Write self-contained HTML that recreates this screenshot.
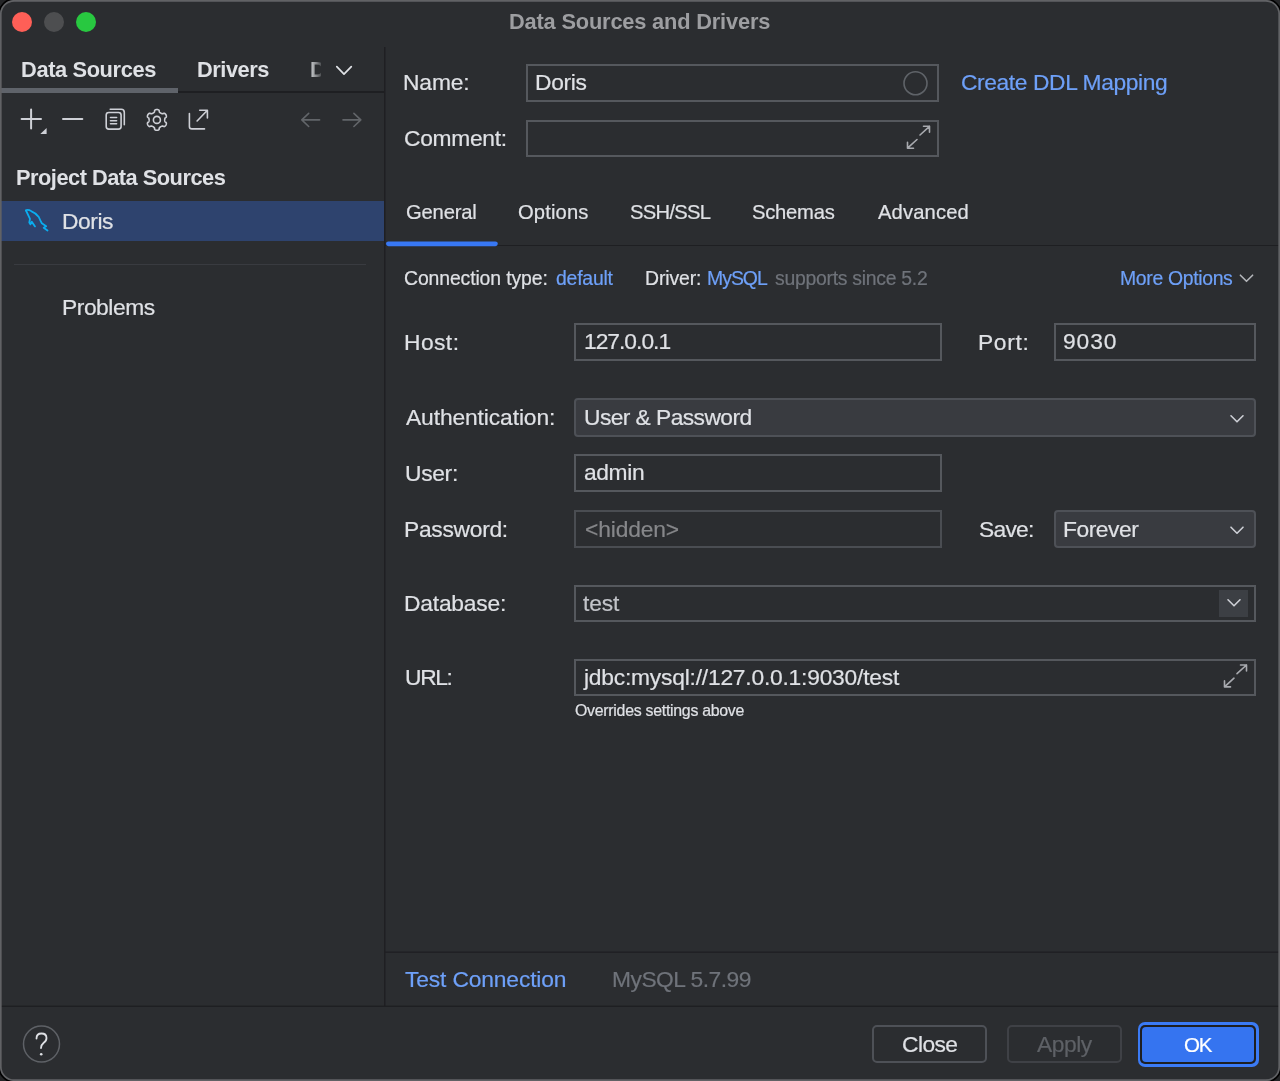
<!DOCTYPE html>
<html><head><meta charset="utf-8"><title>Data Sources and Drivers</title>
<style>
html,body{margin:0;padding:0;width:1280px;height:1081px;overflow:hidden;background:#242527;}
body{font-family:"Liberation Sans",sans-serif;position:relative;}
#win{position:absolute;left:0;top:0;width:1280px;height:1081px;box-sizing:border-box;border-radius:14px;background:#2B2D30;}
.a{position:absolute;box-sizing:border-box;}
.t{position:absolute;line-height:1;white-space:pre;will-change:transform;}
.fld{position:absolute;box-sizing:border-box;border:2px solid #55585D;}
.cmb{position:absolute;box-sizing:border-box;border:2px solid #4E5157;background:#393B40;border-radius:4px;}
.btn{position:absolute;box-sizing:border-box;border:2px solid #4E5157;border-radius:5px;}
svg{position:absolute;left:0;top:0;}
</style></head>
<body>
<div id="win"></div>
<!-- traffic lights -->
<div class="a" style="left:12.4px;top:12.4px;width:20px;height:20px;border-radius:50%;background:#FF5F57"></div>
<div class="a" style="left:44.4px;top:12.4px;width:20px;height:20px;border-radius:50%;background:#4D4E50"></div>
<div class="a" style="left:76.4px;top:12.4px;width:20px;height:20px;border-radius:50%;background:#28C840"></div>
<!-- left panel lines -->
<div class="a" style="left:2px;top:91px;width:382px;height:2px;background:#1E1F22"></div>
<div class="a" style="left:0px;top:88px;width:178px;height:5px;background:#5F636A"></div>
<div class="a" style="left:0px;top:201px;width:384px;height:40px;background:#2E436E"></div>
<div class="a" style="left:14px;top:264px;width:352px;height:1px;background:#393B40"></div>
<!-- vertical divider -->
<svg width="1280" height="1081" viewBox="0 0 1280 1081">
 <rect x="384.1" y="47" width="1.4" height="959" fill="#1E1F22"/>
 <rect x="385" y="951.5" width="895" height="1.3" fill="#1E1F22"/>
 <rect x="0" y="1005.6" width="1280" height="1.4" fill="#1E1F22"/>
 <rect x="385" y="245" width="895" height="1" fill="#1E1F22"/>
 <rect x="386" y="241.4" width="111.8" height="4.8" rx="2.4" fill="#3878F4"/>
</svg>


<!-- bottom lines -->


<!-- tabs -->


<!-- fields -->
<div class="fld" style="left:526px;top:64px;width:413px;height:38px"></div>
<div class="fld" style="left:526px;top:120px;width:413px;height:37px"></div>
<div class="fld" style="left:574px;top:323px;width:368px;height:38px"></div>
<div class="fld" style="left:1054px;top:323px;width:202px;height:38px"></div>
<div class="cmb" style="left:574px;top:398px;width:682px;height:39px"></div>
<div class="fld" style="left:574px;top:454px;width:368px;height:38px"></div>
<div class="fld" style="left:574px;top:510px;width:368px;height:38px;border-color:#4A4D52"></div>
<div class="cmb" style="left:1054px;top:510px;width:202px;height:38px"></div>
<div class="fld" style="left:574px;top:585px;width:682px;height:37px"></div>
<div class="a" style="left:1219px;top:590px;width:29px;height:27px;background:#3C3F44"></div>
<div class="fld" style="left:574px;top:659px;width:682px;height:37px"></div>
<!-- buttons -->
<div class="btn" style="left:872px;top:1025px;width:115px;height:38px"></div>
<div class="btn" style="left:1006.5px;top:1025px;width:115px;height:38px;border-color:#3F4146"></div>
<div class="a" style="left:1138px;top:1022px;width:121px;height:44.5px;border-radius:7px;background:#3B7BF5"></div>
<div class="a" style="left:1140px;top:1025px;width:115.5px;height:38.5px;border-radius:5px;background:#1E1F22"></div>
<div class="a" style="left:1141.5px;top:1026.5px;width:112.5px;height:35.5px;border-radius:4px;background:#3574F0"></div>
<svg width="1280" height="1081" viewBox="0 0 1280 1081" fill="none" stroke-linecap="round" stroke-linejoin="round">
 <!-- toolbar icons -->
 <g stroke="#CED0D6" stroke-width="2">
  <path d="M21.6 119H41M31.1 109.6V128.6"/>
  <path d="M63 119H82.3"/>
 </g>
 <path d="M46.6 128.1V134H40.3Z" fill="#CED0D6"/>
 <g stroke="#CED0D6" stroke-width="1.6">
  <rect x="106.2" y="112.5" width="14.9" height="16.6" rx="2.6"/>
  <path d="M110.2 109.3H121.2Q124.3 109.3 124.3 112.4V124.8"/>
  <path d="M110.5 117.5H116.6M110.5 120.7H116.6M110.5 123.8H116.6"/>
  <circle cx="156.9" cy="119.9" r="3.5"/>
  <path d="M189.4 113.6V126.4Q189.4 128.9 191.9 128.9H204.5"/>
  <path d="M197.1 121L207.4 110.3M199.7 110.3H207.4V118"/>
 </g>
 <path id="gear" stroke="#CED0D6" stroke-width="1.6" d="M164.70 119.90 L164.70 119.70 L164.72 119.49 L164.73 119.28 L164.76 119.07 L164.80 118.86 L164.85 118.64 L164.92 118.41 L165.01 118.18 L165.15 117.92 L165.69 117.54 L166.22 117.14 L166.33 116.84 L166.37 116.55 L166.38 116.26 L166.35 115.98 L166.30 115.71 L166.23 115.45 L166.14 115.19 L166.03 114.94 L165.91 114.70 L165.76 114.47 L165.60 114.25 L165.42 114.04 L165.23 113.85 L165.02 113.67 L164.79 113.51 L164.54 113.37 L164.27 113.27 L163.95 113.21 L163.33 113.47 L162.74 113.75 L162.45 113.74 L162.19 113.70 L161.97 113.64 L161.75 113.58 L161.55 113.50 L161.35 113.42 L161.16 113.34 L160.98 113.24 L160.80 113.15 L160.62 113.04 L160.45 112.93 L160.28 112.81 L160.12 112.68 L159.95 112.54 L159.78 112.39 L159.62 112.22 L159.46 112.02 L159.31 111.77 L159.26 111.11 L159.17 110.45 L158.96 110.20 L158.73 110.02 L158.49 109.87 L158.24 109.76 L157.98 109.66 L157.71 109.59 L157.44 109.54 L157.17 109.51 L156.90 109.50 L156.63 109.51 L156.36 109.54 L156.09 109.59 L155.82 109.66 L155.56 109.76 L155.31 109.87 L155.07 110.02 L154.84 110.20 L154.63 110.45 L154.54 111.11 L154.49 111.77 L154.34 112.02 L154.18 112.22 L154.02 112.39 L153.85 112.54 L153.68 112.68 L153.52 112.81 L153.35 112.93 L153.18 113.04 L153.00 113.15 L152.82 113.24 L152.64 113.34 L152.45 113.42 L152.25 113.50 L152.05 113.58 L151.83 113.64 L151.61 113.70 L151.35 113.74 L151.06 113.75 L150.47 113.47 L149.85 113.21 L149.53 113.27 L149.26 113.37 L149.01 113.51 L148.78 113.67 L148.57 113.85 L148.38 114.04 L148.20 114.25 L148.04 114.47 L147.89 114.70 L147.77 114.94 L147.66 115.19 L147.57 115.45 L147.50 115.71 L147.45 115.98 L147.42 116.26 L147.43 116.55 L147.47 116.84 L147.58 117.14 L148.11 117.54 L148.65 117.92 L148.79 118.18 L148.88 118.41 L148.95 118.64 L149.00 118.86 L149.04 119.07 L149.07 119.28 L149.08 119.49 L149.10 119.70 L149.10 119.90 L149.10 120.10 L149.08 120.31 L149.07 120.52 L149.04 120.73 L149.00 120.94 L148.95 121.16 L148.88 121.39 L148.79 121.62 L148.65 121.88 L148.11 122.26 L147.58 122.66 L147.47 122.96 L147.43 123.25 L147.42 123.54 L147.45 123.82 L147.50 124.09 L147.57 124.35 L147.66 124.61 L147.77 124.86 L147.89 125.10 L148.04 125.33 L148.20 125.55 L148.38 125.76 L148.57 125.95 L148.78 126.13 L149.01 126.29 L149.26 126.43 L149.53 126.53 L149.85 126.59 L150.47 126.33 L151.06 126.05 L151.35 126.06 L151.61 126.10 L151.83 126.16 L152.05 126.22 L152.25 126.30 L152.45 126.38 L152.64 126.46 L152.82 126.56 L153.00 126.65 L153.18 126.76 L153.35 126.87 L153.52 126.99 L153.68 127.12 L153.85 127.26 L154.02 127.41 L154.18 127.58 L154.34 127.78 L154.49 128.03 L154.54 128.69 L154.63 129.35 L154.84 129.60 L155.07 129.78 L155.31 129.93 L155.56 130.04 L155.82 130.14 L156.09 130.21 L156.36 130.26 L156.63 130.29 L156.90 130.30 L157.17 130.29 L157.44 130.26 L157.71 130.21 L157.98 130.14 L158.24 130.04 L158.49 129.93 L158.73 129.78 L158.96 129.60 L159.17 129.35 L159.26 128.69 L159.31 128.03 L159.46 127.78 L159.62 127.58 L159.78 127.41 L159.95 127.26 L160.12 127.12 L160.28 126.99 L160.45 126.87 L160.62 126.76 L160.80 126.65 L160.98 126.56 L161.16 126.46 L161.35 126.38 L161.55 126.30 L161.75 126.22 L161.97 126.16 L162.19 126.10 L162.45 126.06 L162.74 126.05 L163.33 126.33 L163.95 126.59 L164.27 126.53 L164.54 126.43 L164.79 126.29 L165.02 126.13 L165.23 125.95 L165.42 125.76 L165.60 125.55 L165.76 125.33 L165.91 125.10 L166.03 124.86 L166.14 124.61 L166.23 124.35 L166.30 124.09 L166.35 123.82 L166.38 123.54 L166.37 123.25 L166.33 122.96 L166.22 122.66 L165.69 122.26 L165.15 121.88 L165.01 121.62 L164.92 121.39 L164.85 121.16 L164.80 120.94 L164.76 120.73 L164.73 120.52 L164.72 120.31 L164.70 120.10Z"/>
 <g stroke="#626569" stroke-width="1.6">
  <path d="M301.8 119.9H319.6M308.7 113.4L301.8 119.9L308.7 126.5"/>
  <path d="M343 119.9H360.8M353.9 113.4L360.8 119.9L353.9 126.5"/>
 </g>
 <path d="M336.8 66.6L344 74.2L351.3 66.6" stroke="#DFE1E5" stroke-width="1.7"/>
 <!-- dolphin -->
 <g stroke="#0AAEF0" stroke-width="1.8">
  <path d="M26 210.3Q28 209.3 31.5 211.3Q36 213 38.8 217Q40.5 221 41.8 223.3Q44 224.8 46.2 226.2L43.7 227.7L47.5 230.5"/>
  <path d="M26 210.5L28.8 216.3L30 218.8L29.3 222.5L30.4 224.4L31.8 221.8L35 226.4"/>
 </g>
 <!-- name circle, expand icons -->
 <circle cx="915.5" cy="83.3" r="11.5" stroke="#5F6368" stroke-width="1.6"/>
 <g stroke="#A8AAAF" stroke-width="1.6">
  <path d="M920 135L929.5 126.3M923.5 126.3H929.5V132.3"/>
  <path d="M917 139.5L907.5 148.2M913.5 148.2H907.5V142.2"/>
  <path d="M1237 673.7L1246.5 665M1240.5 665H1246.5V671"/>
  <path d="M1234 678.2L1224.5 686.9M1230.5 686.9H1224.5V680.9"/>
 </g>
 <!-- chevrons -->
 <path d="M1240.4 275.2L1246.5 281.3L1252.6 275.2" stroke="#B4B6BA" stroke-width="1.6"/>
 <g stroke="#CED0D6" stroke-width="1.6">
  <path d="M1231 415.8L1237 421.8L1243 415.8"/>
  <path d="M1231 527.2L1237 533.2L1243 527.2"/>
  <path d="M1228 599.8L1234 605.8L1240 599.8"/>
 </g>
 <!-- help -->
 <circle cx="41.5" cy="1044" r="18" stroke="#5E6166" stroke-width="1.5"/>
 <path d="M36.5 1038.5Q36.5 1033.5 41.5 1033.5Q46.5 1033.5 46.5 1038Q46.5 1041 43.5 1043Q41 1045 41 1048" stroke="#DFE1E5" stroke-width="1.8"/>
 <circle cx="41.2" cy="1054.3" r="1.3" fill="#DFE1E5"/>
</svg>
<!-- truncated D tab -->
<div class="t" style="left:310px;top:58.6px;font-size:22px;font-weight:700;color:#B8BABD;width:11px;overflow:hidden;-webkit-mask-image:linear-gradient(90deg,#000 20%,rgba(0,0,0,.25) 100%)">D</div>

<div class='t' style='left:508.50px;top:10.65px;font-size:21.8px;font-weight:700;color:#9D9EA1;letter-spacing:-0.174px;-webkit-text-stroke:0 #9D9EA1'>Data Sources and Drivers</div>
<div class='t' style='left:20.55px;top:58.65px;font-size:21.8px;font-weight:700;color:#DFE1E5;letter-spacing:-0.364px;-webkit-text-stroke:0 #DFE1E5'>Data Sources</div>
<div class='t' style='left:196.80px;top:58.65px;font-size:21.8px;font-weight:700;color:#DFE1E5;letter-spacing:-0.450px;-webkit-text-stroke:0 #DFE1E5'>Drivers</div>
<div class='t' style='left:15.80px;top:167.25px;font-size:21.8px;font-weight:700;color:#DFE1E5;letter-spacing:-0.500px;-webkit-text-stroke:0 #DFE1E5'>Project Data Sources</div>
<div class='t' style='left:62.10px;top:210.00px;font-size:22.8px;font-weight:400;color:#DFE1E5;letter-spacing:-0.450px;-webkit-text-stroke:0.2px #DFE1E5'>Doris</div>
<div class='t' style='left:61.60px;top:295.80px;font-size:22.8px;font-weight:400;color:#DFE1E5;letter-spacing:-0.457px;-webkit-text-stroke:0.2px #DFE1E5'>Problems</div>
<div class='t' style='left:403.40px;top:71.00px;font-size:22.8px;font-weight:400;color:#DFE1E5;letter-spacing:-0.125px;-webkit-text-stroke:0.2px #DFE1E5'>Name:</div>
<div class='t' style='left:534.70px;top:71.00px;font-size:22.8px;font-weight:400;color:#DFE1E5;letter-spacing:-0.300px;-webkit-text-stroke:0.2px #DFE1E5'>Doris</div>
<div class='t' style='left:404.40px;top:126.60px;font-size:22.8px;font-weight:400;color:#DFE1E5;letter-spacing:-0.286px;-webkit-text-stroke:0.2px #DFE1E5'>Comment:</div>
<div class='t' style='left:961.20px;top:70.50px;font-size:22.8px;font-weight:400;color:#6EA0F8;letter-spacing:-0.388px;-webkit-text-stroke:0.2px #6EA0F8'>Create DDL Mapping</div>
<div class='t' style='left:406.20px;top:202.25px;font-size:20.2px;font-weight:400;color:#DFE1E5;letter-spacing:-0.167px;-webkit-text-stroke:0.2px #DFE1E5'>General</div>
<div class='t' style='left:518.20px;top:202.25px;font-size:20.2px;font-weight:400;color:#DFE1E5;letter-spacing:0.125px;-webkit-text-stroke:0.2px #DFE1E5'>Options</div>
<div class='t' style='left:629.90px;top:202.25px;font-size:20.2px;font-weight:400;color:#DFE1E5;letter-spacing:-0.700px;-webkit-text-stroke:0.2px #DFE1E5'>SSH/SSL</div>
<div class='t' style='left:751.90px;top:202.25px;font-size:20.2px;font-weight:400;color:#DFE1E5;letter-spacing:-0.233px;-webkit-text-stroke:0.2px #DFE1E5'>Schemas</div>
<div class='t' style='left:877.50px;top:202.25px;font-size:20.2px;font-weight:400;color:#DFE1E5;letter-spacing:0.143px;-webkit-text-stroke:0.2px #DFE1E5'>Advanced</div>
<div class='t' style='left:404.45px;top:268.68px;font-size:19.4px;font-weight:400;color:#DFE1E5;letter-spacing:-0.117px;-webkit-text-stroke:0.2px #DFE1E5'>Connection type:</div>
<div class='t' style='left:556.20px;top:268.68px;font-size:19.4px;font-weight:400;color:#6EA0F8;letter-spacing:-0.208px;-webkit-text-stroke:0.2px #6EA0F8'>default</div>
<div class='t' style='left:644.50px;top:268.68px;font-size:19.4px;font-weight:400;color:#DFE1E5;letter-spacing:-0.117px;-webkit-text-stroke:0.2px #DFE1E5'>Driver:</div>
<div class='t' style='left:706.90px;top:268.68px;font-size:19.4px;font-weight:400;color:#6EA0F8;letter-spacing:-0.975px;-webkit-text-stroke:0.2px #6EA0F8'>MySQL</div>
<div class='t' style='left:774.90px;top:268.68px;font-size:19.4px;font-weight:400;color:#6F737A;letter-spacing:-0.276px;-webkit-text-stroke:0.2px #6F737A'>supports since 5.2</div>
<div class='t' style='left:1120.00px;top:268.68px;font-size:19.4px;font-weight:400;color:#6EA0F8;letter-spacing:-0.327px;-webkit-text-stroke:0.2px #6EA0F8'>More Options</div>
<div class='t' style='left:403.70px;top:331.30px;font-size:22.8px;font-weight:400;color:#DFE1E5;letter-spacing:0.438px;-webkit-text-stroke:0.2px #DFE1E5'>Host:</div>
<div class='t' style='left:583.70px;top:330.30px;font-size:22.8px;font-weight:400;color:#DFE1E5;letter-spacing:-1.000px;-webkit-text-stroke:0.2px #DFE1E5'>127.0.0.1</div>
<div class='t' style='left:977.80px;top:331.30px;font-size:22.8px;font-weight:400;color:#DFE1E5;letter-spacing:0.650px;-webkit-text-stroke:0.2px #DFE1E5'>Port:</div>
<div class='t' style='left:1063.40px;top:330.30px;font-size:22.8px;font-weight:400;color:#DFE1E5;letter-spacing:0.900px;-webkit-text-stroke:0.2px #DFE1E5'>9030</div>
<div class='t' style='left:405.70px;top:406.30px;font-size:22.8px;font-weight:400;color:#DFE1E5;letter-spacing:-0.107px;-webkit-text-stroke:0.2px #DFE1E5'>Authentication:</div>
<div class='t' style='left:583.70px;top:406.30px;font-size:22.8px;font-weight:400;color:#DFE1E5;letter-spacing:-0.571px;-webkit-text-stroke:0.2px #DFE1E5'>User &amp; Password</div>
<div class='t' style='left:404.70px;top:462.05px;font-size:22.8px;font-weight:400;color:#DFE1E5;letter-spacing:-0.312px;-webkit-text-stroke:0.2px #DFE1E5'>User:</div>
<div class='t' style='left:583.70px;top:461.30px;font-size:22.8px;font-weight:400;color:#DFE1E5;letter-spacing:-0.375px;-webkit-text-stroke:0.2px #DFE1E5'>admin</div>
<div class='t' style='left:403.70px;top:517.80px;font-size:22.8px;font-weight:400;color:#DFE1E5;letter-spacing:-0.281px;-webkit-text-stroke:0.2px #DFE1E5'>Password:</div>
<div class='t' style='left:584.70px;top:517.80px;font-size:22.8px;font-weight:400;color:#86878A;letter-spacing:-0.143px;-webkit-text-stroke:0.2px #86878A'>&lt;hidden&gt;</div>
<div class='t' style='left:978.80px;top:517.80px;font-size:22.8px;font-weight:400;color:#DFE1E5;letter-spacing:-0.725px;-webkit-text-stroke:0.2px #DFE1E5'>Save:</div>
<div class='t' style='left:1063.00px;top:517.80px;font-size:22.8px;font-weight:400;color:#DFE1E5;letter-spacing:-0.467px;-webkit-text-stroke:0.2px #DFE1E5'>Forever</div>
<div class='t' style='left:403.70px;top:592.40px;font-size:22.8px;font-weight:400;color:#DFE1E5;letter-spacing:-0.200px;-webkit-text-stroke:0.2px #DFE1E5'>Database:</div>
<div class='t' style='left:582.70px;top:592.40px;font-size:22.8px;font-weight:400;color:#C2C4C9;letter-spacing:-0.167px;-webkit-text-stroke:0.2px #C2C4C9'>test</div>
<div class='t' style='left:404.70px;top:665.50px;font-size:22.8px;font-weight:400;color:#DFE1E5;letter-spacing:-1.333px;-webkit-text-stroke:0.2px #DFE1E5'>URL:</div>
<div class='t' style='left:583.80px;top:665.50px;font-size:22.8px;font-weight:400;color:#DFE1E5;letter-spacing:-0.213px;-webkit-text-stroke:0.2px #DFE1E5'>jdbc:mysql://127.0.0.1:9030/test</div>
<div class='t' style='left:574.80px;top:702.64px;font-size:15.9px;font-weight:400;color:#DFE1E5;letter-spacing:-0.278px;-webkit-text-stroke:0.2px #DFE1E5'>Overrides settings above</div>
<div class='t' style='left:404.60px;top:967.70px;font-size:22.8px;font-weight:400;color:#6EA0F8;letter-spacing:-0.143px;-webkit-text-stroke:0.2px #6EA0F8'>Test Connection</div>
<div class='t' style='left:611.95px;top:967.70px;font-size:22.8px;font-weight:400;color:#6F737A;letter-spacing:-0.500px;-webkit-text-stroke:0.2px #6F737A'>MySQL 5.7.99</div>
<div class='t' style='left:901.90px;top:1032.80px;font-size:22.8px;font-weight:400;color:#DFE1E5;letter-spacing:-0.575px;-webkit-text-stroke:0.2px #DFE1E5'>Close</div>
<div class='t' style='left:1037.40px;top:1032.80px;font-size:22.8px;font-weight:400;color:#5E6166;letter-spacing:-0.475px;-webkit-text-stroke:0.2px #5E6166'>Apply</div>
<div class='t' style='left:1184.00px;top:1034.75px;font-size:20.5px;font-weight:400;color:#FFFFFF;letter-spacing:-1.100px;-webkit-text-stroke:0.2px #FFFFFF'>OK</div>
<svg width="1280" height="1081" style="position:absolute;left:0;top:0"><rect x="-0.9" y="-0.9" width="1281.8" height="1082.8" rx="15" fill="none" stroke="#000" stroke-width="1.6"/><rect x="0.8" y="0.8" width="1278.4" height="1079.4" rx="13.5" fill="none" stroke="#616265" stroke-width="1.7"/></svg>
</body></html>
